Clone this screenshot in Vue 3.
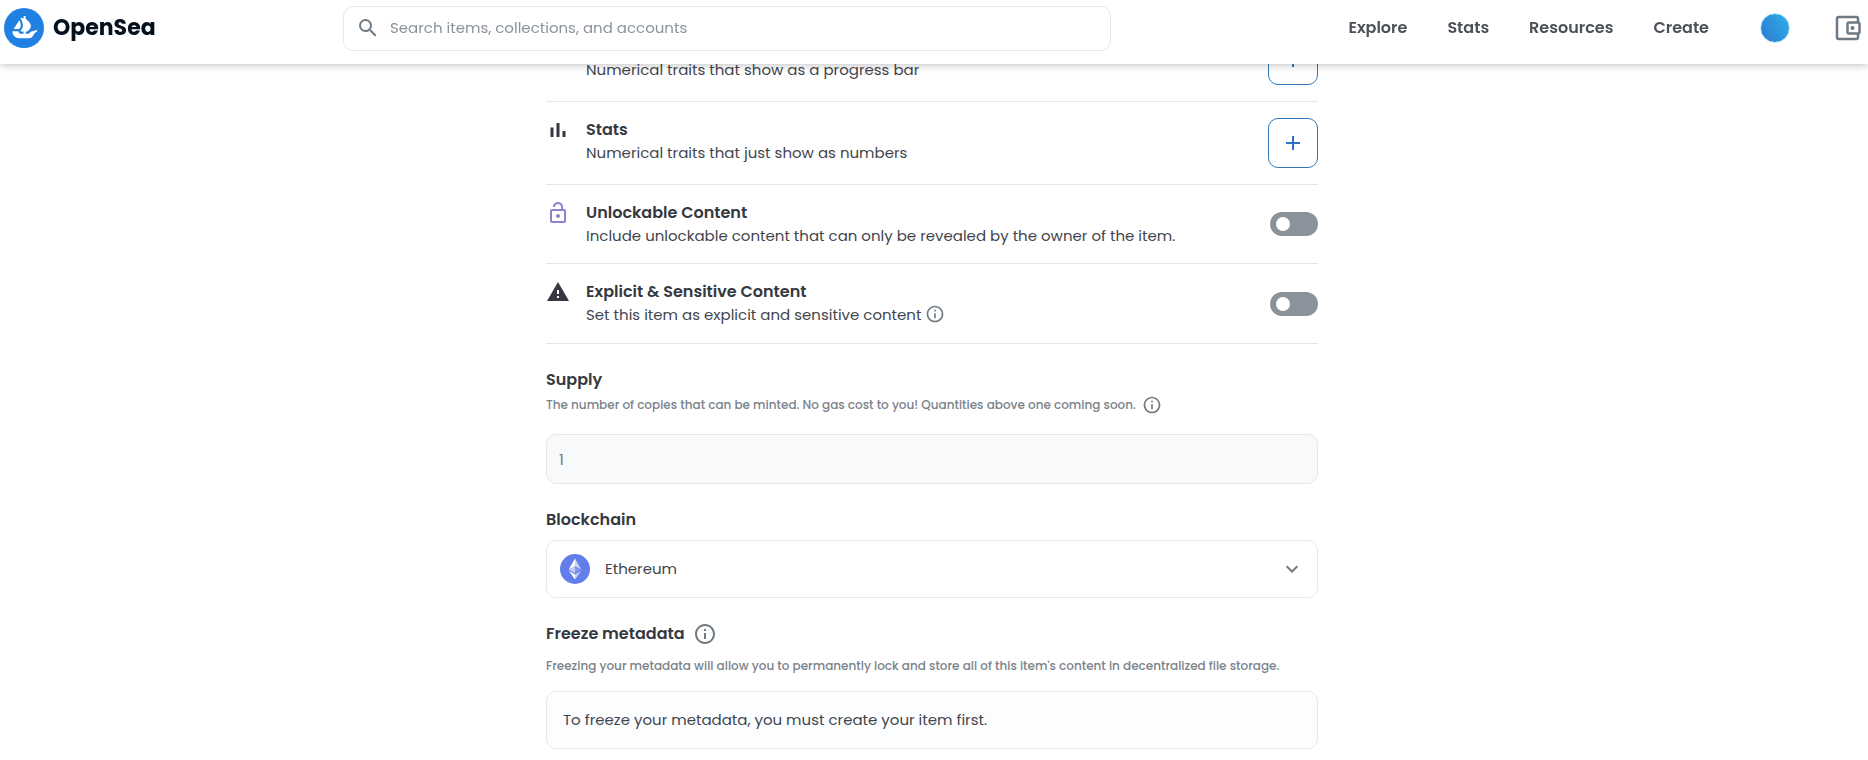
<script setup>
import { ref } from 'vue'

const navLinks = ['Explore', 'Stats', 'Resources', 'Create']

const traits = [
  { id: 'levels', title: 'Levels', text: 'Numerical traits that show as a progress bar', icon: 'star' },
  { id: 'stats', title: 'Stats', text: 'Numerical traits that just show as numbers', icon: 'bars' },
]

const icons = {
  star: 'M12 17.27 18.18 21l-1.64-7.03L22 9.24l-7.19-.61L12 2 9.19 8.63 2 9.24l5.46 4.73L5.82 21z',
  bars: 'M4.500 9.500h3v9.500h-3zM10.500 5h3v14h-3zM16.500 13h3v6h-3z',
  info: 'M11 7h2v2h-2zm0 4h2v6h-2zm1-9C6.48 2 2 6.48 2 12s4.48 10 10 10 10-4.480 10-10S17.520 2 12 2zm0 18c-4.410 0-8-3.590-8-8s3.590-8 8-8 8 3.590 8 8-3.590 8-8 8z',
}

const search = ref('')
const unlockable = ref(false)
const explicit = ref(false)
const supply = ref('1')
const chain = ref('Ethereum')
</script>

<template>
  <div class="page">
    <header class="topbar">
      <a class="brand" href="#">
        <svg class="brand-mark" viewBox="0 0 90 90" aria-hidden="true">
          <circle cx="45" cy="45" r="45" fill="#2081e2" />
          <path fill="#fff" d="M22.2011 46.512L22.3953 46.2069L34.1016 27.8939C34.2726 27.6257 34.6749 27.6535 34.8043 27.9447C36.76 32.3277 38.4475 37.7786 37.6569 41.1721C37.3194 42.5683 36.3948 44.4593 35.3545 46.2069C35.2205 46.4612 35.0726 46.7109 34.9154 46.9513C34.8414 47.0622 34.7166 47.127 34.5825 47.127H22.5432C22.2196 47.127 22.0299 46.7756 22.2011 46.512Z" />
          <path fill="#fff" d="M74.38 49.9149V52.8137C74.38 52.9801 74.2783 53.1281 74.1304 53.1928C73.2242 53.5812 70.1219 55.0052 68.832 56.799C65.5402 61.3807 63.0251 67.932 57.4031 67.932H33.949C25.6362 67.932 18.9 61.1727 18.9 52.8322V52.564C18.9 52.3421 19.0803 52.1618 19.3023 52.1618H32.377C32.6359 52.1618 32.8255 52.4022 32.8024 52.6565C32.7099 53.5072 32.8671 54.3764 33.2693 55.167C34.0461 56.7435 35.655 57.7283 37.3934 57.7283H43.866V52.675H37.4673C37.1391 52.675 36.9449 52.2959 37.1345 52.0277C37.2038 51.9214 37.2824 51.8104 37.3656 51.6856C37.9713 50.8257 38.8358 49.4895 39.6958 47.9684C40.2829 46.9421 40.8516 45.8463 41.3093 44.746C41.4018 44.5472 41.4758 44.3438 41.5497 44.1449C41.6746 43.7936 41.804 43.4653 41.8965 43.137C41.9889 42.8597 42.0629 42.5684 42.1369 42.2956C42.3542 41.3617 42.4467 40.3723 42.4467 39.3459C42.4467 38.9437 42.4282 38.523 42.3912 38.1207C42.3727 37.6815 42.3172 37.2423 42.2617 36.8031C42.2247 36.4147 42.1554 36.031 42.0814 35.6288C41.9889 35.0416 41.8595 34.4591 41.7115 33.8719L41.6607 33.65C41.5497 33.2478 41.4573 32.864 41.3278 32.4618C40.9626 31.1996 40.5418 29.9698 40.098 28.8186C39.9362 28.3609 39.7512 27.9217 39.5663 27.4825C39.2935 26.8213 39.0161 26.2203 38.7619 25.6516C38.6324 25.3927 38.5214 25.1569 38.4105 24.9165C38.2857 24.6437 38.1562 24.371 38.0268 24.1121C37.9343 23.9132 37.8279 23.7283 37.754 23.5434L36.9634 22.0824C36.8524 21.8836 37.0374 21.6478 37.2546 21.7079L42.2016 23.0486L42.8858 23.2336L43.6025 23.437L43.866 23.511V20.5706C43.866 19.1512 45.0032 18 46.4089 18C47.1116 18 47.7496 18.2866 48.2073 18.7536C48.665 19.2206 48.9517 19.8586 48.9517 20.5706V24.935L49.4787 25.0829C49.5204 25.0968 49.562 25.1153 49.599 25.143C49.7284 25.2401 49.9133 25.3835 50.1491 25.5591C50.3341 25.7071 50.533 25.8874 50.7734 26.0723C51.2496 26.4561 51.8181 26.9508 52.4423 27.5194C52.6087 27.6628 52.7706 27.8107 52.9185 27.9587C53.723 28.7077 54.6245 29.5861 55.4845 30.557C55.7249 30.8297 55.9607 31.1071 56.2011 31.3984C56.4415 31.6943 56.6958 31.9856 56.9177 32.2769C57.209 32.6652 57.5233 33.0674 57.7961 33.4882C57.9255 33.687 58.0735 33.8904 58.1983 34.0892C58.5497 34.6209 58.8595 35.1711 59.1554 35.7212C59.2802 35.9755 59.4096 36.2529 59.5206 36.5257C59.8488 37.2608 60.1077 38.0098 60.2742 38.7588C60.3251 38.9206 60.362 39.0963 60.3805 39.2535V39.2904C60.436 39.5124 60.4545 39.7482 60.473 39.9886C60.547 40.756 60.51 41.5235 60.3436 42.2956C60.2742 42.6239 60.1817 42.933 60.0708 43.2613C59.9598 43.5757 59.8488 43.904 59.7055 44.2137C59.4281 44.8564 59.0999 45.4991 58.7115 46.1002C58.5867 46.3221 58.4388 46.5579 58.2908 46.7798C58.129 47.0156 57.9625 47.2375 57.8146 47.4548C57.6112 47.7321 57.3939 48.0234 57.172 48.2823C56.9732 48.5551 56.7697 48.8278 56.5478 49.0682C56.2381 49.4335 55.9422 49.7802 55.6324 50.1131C55.4475 50.3304 55.2487 50.5523 55.0452 50.7511C54.8464 50.973 54.643 51.1718 54.458 51.3568C54.1483 51.6665 53.8894 51.907 53.6721 52.1058L53.1636 52.5727C53.0896 52.6375 52.9925 52.6745 52.8908 52.6745H48.9517V57.7283H53.9079C55.0175 57.7283 56.0716 57.3353 56.9223 56.6141C57.2136 56.3598 58.485 55.2594 59.9875 53.5996C60.0384 53.5441 60.1031 53.5025 60.1771 53.484L73.8669 49.5265C74.1211 49.4525 74.38 49.6467 74.38 49.9149Z" />
        </svg>
        <span class="brand-name">OpenSea</span>
      </a>

      <label class="search">
        <svg class="icon" viewBox="0 0 24 24" aria-hidden="true">
          <path d="M15.500 14h-.79l-.28-.27A6.471 6.471 0 0 0 16 9.500 6.500 6.500 0 1 0 9.500 16c1.610 0 3.090-.59 4.230-1.570l.27.28v.79l5 4.990L20.490 19l-4.990-5zm-6 0C7.010 14 5 11.990 5 9.500S7.010 5 9.500 5 14 7.010 14 9.500 11.990 14 9.500 14z" />
        </svg>
        <input v-model="search" type="search" aria-label="Search" placeholder="Search items, collections, and accounts" />
      </label>

      <div class="menu">
        <nav class="nav">
          <a v-for="link in navLinks" :key="link" href="#">{{ link }}</a>
        </nav>
        <button class="avatar" type="button" aria-label="Account"></button>
        <button class="wallet" type="button" aria-label="Wallet">
          <svg viewBox="0 0 28 28" aria-hidden="true" fill="none" stroke="#707a83" stroke-width="2.500">
            <path d="M24 8.500V4.500A1.500 1.500 0 0 0 22.500 3h-18A1.500 1.500 0 0 0 3 4.500v19A1.500 1.500 0 0 0 4.500 25h18a1.500 1.500 0 0 0 1.500-1.500V19.500" />
            <rect x="13.500" y="8.500" width="12" height="11" rx="1.500" />
            <circle cx="18.500" cy="14" r="2" fill="#707a83" stroke="none" />
          </svg>
        </button>
      </div>
    </header>

    <main class="form">
      <section v-for="trait in traits" :key="trait.id" class="row">
        <svg class="icon dark" viewBox="0 0 24 24" aria-hidden="true"><path :d="icons[trait.icon]" /></svg>
        <div class="row-text">
          <h2>{{ trait.title }}</h2>
          <p>{{ trait.text }}</p>
        </div>
        <button class="add" type="button" :aria-label="`Add ${trait.title}`">
          <svg class="icon" viewBox="0 0 24 24" aria-hidden="true"><path d="M19 13h-6v6h-2v-6H5v-2h6V5h2v6h6z" /></svg>
        </button>
      </section>

      <section class="row">
        <svg class="icon violet" viewBox="0 0 24 24" aria-hidden="true">
          <path d="M12 17c1.100 0 2-.9 2-2s-.9-2-2-2-2 .9-2 2 .9 2 2 2zm6-9h-1V6c0-2.760-2.240-5-5-5S7 3.240 7 6h1.900c0-1.710 1.390-3.100 3.100-3.100s3.100 1.390 3.100 3.100v2H6c-1.100 0-2 .9-2 2v10c0 1.100.9 2 2 2h12c1.100 0 2-.9 2-2V10c0-1.100-.9-2-2-2zm0 12H6V10h12v10z" />
        </svg>
        <div class="row-text">
          <h2><label for="unlockable">Unlockable Content</label></h2>
          <p>Include unlockable content that can only be revealed by the owner of the item.</p>
        </div>
        <input id="unlockable" v-model="unlockable" class="switch" type="checkbox" role="switch" />
      </section>

      <section class="row">
        <svg class="icon dark" viewBox="0 0 24 24" aria-hidden="true"><path d="M1 21h22L12 2 1 21zm12-3h-2v-2h2v2zm0-4h-2v-4h2v4z" /></svg>
        <div class="row-text">
          <h2><label for="explicit">Explicit &amp; Sensitive Content</label></h2>
          <p class="with-info">
            Set this item as explicit and sensitive content
            <svg class="icon info" viewBox="0 0 24 24" aria-hidden="true"><path :d="icons.info" /></svg>
          </p>
        </div>
        <input id="explicit" v-model="explicit" class="switch" type="checkbox" role="switch" />
      </section>

      <section class="field">
        <h2><label for="supply">Supply</label></h2>
        <p class="hint with-info">
          The number of copies that can be minted. No gas cost to you! Quantities above one coming soon.
          <svg class="icon info" viewBox="0 0 24 24" aria-hidden="true"><path :d="icons.info" /></svg>
        </p>
        <input id="supply" v-model="supply" class="supply" type="text" disabled />
      </section>

      <section class="field">
        <h2><label for="chain">Blockchain</label></h2>
        <div class="select">
          <svg class="eth" viewBox="0 0 30 30" aria-hidden="true">
            <circle cx="15" cy="15" r="15" fill="#627eea" />
            <path fill="#c9d2f8" d="M15 4.500v7.800l6.300 3.100z" />
            <path fill="#fff" d="M15 4.500 8.700 15.400 15 12.300z" />
            <path fill="#8197ee" d="M15 12.300v7l6.300-3.900z" />
            <path fill="#c0cbf7" d="M15 12.300 8.700 15.400 15 19.300z" />
            <path fill="#fff" d="M15 25.500v-5L8.700 16.800z" />
            <path fill="#c9d2f8" d="M15 25.500v-5l6.300-3.700z" />
          </svg>
          <select id="chain" v-model="chain">
            <option>Ethereum</option>
          </select>
          <svg class="icon chevron" viewBox="0 0 24 24" aria-hidden="true"><path d="M7.410 8.590 12 13.170l4.590-4.580L18 10l-6 6-6-6z" /></svg>
        </div>
      </section>

      <section class="field">
        <h2 class="with-info freeze-title">
          Freeze metadata
          <svg class="icon" viewBox="0 0 24 24" aria-hidden="true"><path :d="icons.info" /></svg>
        </h2>
        <p class="hint freeze-hint">Freezing your metadata will allow you to permanently lock and store all of this item's content in decentralized file storage.</p>
        <div class="notice">To freeze your metadata, you must create your item first.</div>
      </section>
    </main>
  </div>
</template>

<style>
body {
  margin: 0;
  background: #fff;
}
</style>

<style scoped>
.page {
  font-family: Poppins, Inter, "Open Sans", sans-serif;
  font-size: 15px;
  font-weight: 400;
  line-height: 24px;
  color: #42454d;
}
.page * {
  box-sizing: border-box;
}
h2,
p {
  margin: 0;
}
h2 {
  font-size: 16px;
  font-weight: 600;
  line-height: 24px;
  color: #353840;
}
input,
select,
button {
  font: inherit;
  color: inherit;
  margin: 0;
}
svg {
  display: block;
  flex: none;
}
.icon {
  width: 24px;
  height: 24px;
  fill: #707a83;
}
.icon.dark {
  fill: #353840;
}
.icon.violet {
  fill: #9080d0;
}

.topbar {
  position: fixed;
  inset: 0 0 auto 0;
  z-index: 1;
  height: 64px;
  padding: 0 6px 8px 4px;
  display: grid;
  grid-template-columns: 339px minmax(0, 768px) 1fr;
  align-items: center;
  background: #fff;
  box-shadow: 0 1px 8px rgba(0, 0, 0, 0.25);
}
.brand {
  display: flex;
  align-items: center;
  gap: 9px;
  color: #04111d;
  text-decoration: none;
}
.brand-mark {
  width: 40px;
  height: 40px;
}
.brand-name {
  font-size: 22px;
  font-weight: 700;
}
.search {
  height: 45px;
  padding: 0 12px;
  display: flex;
  align-items: center;
  gap: 10px;
  border: 1px solid #e5e8eb;
  border-radius: 10px;
}
.search input {
  flex: 1;
  min-width: 0;
  padding: 0;
  border: 0;
  outline: 0;
  background: none;
}
.search input::placeholder {
  color: #8a939b;
  opacity: 1;
}
.menu {
  display: flex;
  align-items: center;
  justify-content: flex-end;
}
.nav {
  display: flex;
  gap: 40px;
  margin-right: 51px;
}
.nav a {
  font-size: 16px;
  font-weight: 600;
  color: #4c5057;
  text-decoration: none;
}
.avatar {
  width: 30px;
  height: 30px;
  padding: 0;
  border: 1px solid #c8effc;
  border-radius: 50%;
  background: linear-gradient(60deg, #2b78cf, #30b0ea);
}
.wallet {
  width: 28px;
  height: 28px;
  margin-left: 44px;
  padding: 0;
  border: 0;
  background: none;
}

.form {
  max-width: 776px;
  margin: 0 auto;
  padding: 19px 4px 11px 0;
  box-sizing: border-box;
}
.row {
  display: flex;
  align-items: flex-start;
  gap: 16px;
  padding: 16px 0;
  border-bottom: 1px solid #e5e8eb;
}
.row-text {
  flex: 1;
}
.row-text p {
  line-height: 22px;
}
.add {
  width: 50px;
  height: 50px;
  padding: 0;
  display: grid;
  place-items: center;
  border: 1px solid #2f78b8;
  border-radius: 10px;
  background: #fff;
}
.add .icon {
  fill: #2b72c4;
}
.switch {
  appearance: none;
  align-self: center;
  width: 48px;
  height: 24px;
  padding: 5px 6px;
  display: flex;
  border-radius: 12px;
  background: #8a939b;
}
.switch::before {
  content: "";
  width: 14px;
  height: 14px;
  border-radius: 50%;
  background: #fff;
}
.switch:checked {
  justify-content: flex-end;
  background: #2081e2;
}
.with-info {
  display: flex;
  align-items: center;
  gap: 6px;
}
.row-text .with-info {
  align-items: flex-start;
  gap: 4px;
  min-height: 23px;
}
.icon.info {
  width: 20px;
  height: 20px;
}

.field {
  padding-top: 24px;
}
.hint {
  font-size: 12px;
  font-weight: 500;
  line-height: 26px;
  color: #7a838b;
}
.supply {
  width: 100%;
  height: 50px;
  margin-top: 16px;
  padding: 0 12px;
  display: block;
  border: 1px solid #e5e8eb;
  border-radius: 10px;
  background: #f8f9fb;
  color: #707a83;
}
.select {
  position: relative;
  margin-top: 8px;
}
.select select {
  appearance: none;
  width: 100%;
  height: 58px;
  padding: 0 58px;
  display: block;
  border: 1px solid #e5e8eb;
  border-radius: 10px;
  background: #fff;
}
.eth {
  position: absolute;
  top: 14px;
  left: 14px;
  width: 30px;
  height: 30px;
}
.chevron {
  position: absolute;
  top: 17px;
  right: 14px;
  pointer-events: none;
}
.freeze-title {
  gap: 8px;
}
.freeze-hint {
  margin-top: 7px;
}
.notice {
  margin-top: 12px;
  padding: 16px;
  border: 1px solid #e5e8eb;
  border-radius: 10px;
  background: #fbfdff;
}
</style>
